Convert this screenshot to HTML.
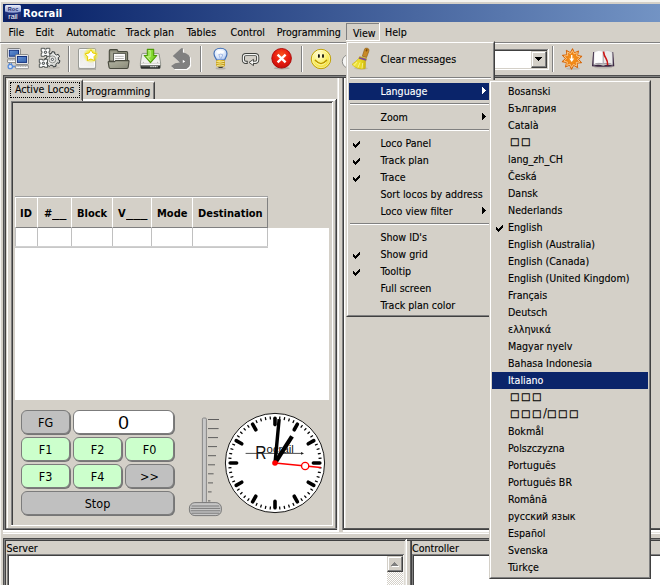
<!DOCTYPE html>
<html><head><meta charset="utf-8"><title>Rocrail</title>
<style>
html,body{margin:0;padding:0;}
body{width:660px;height:585px;overflow:hidden;background:#D4D0C8;position:relative;font-family:"DejaVu Sans Condensed","DejaVu Sans","Liberation Sans",sans-serif;font-stretch:condensed;font-size:10.6px;color:#000;}
#w{position:absolute;left:0;top:0;width:660px;height:585px;overflow:hidden;}
#w>div,#w>span,#w>svg{position:absolute;}
.t{white-space:pre;line-height:14px;height:14px;-webkit-text-stroke:0.12px currentColor;}
.b{font-weight:bold;font-size:11px;-webkit-text-stroke:0;}
.u{display:inline-block;transform:scaleX(1.45);transform-origin:0 0;}
.w{color:#fff;}
.btn{border-radius:6px;box-sizing:border-box;border:1px solid #7c7c7c;box-shadow:1px 1px 0 #767676;text-align:center;font-size:12.5px;line-height:24px;}
.tofu{font-family:"DejaVu Sans",sans-serif;font-stretch:normal;font-size:10px;letter-spacing:1.55px;-webkit-text-stroke:0.3px #000;}
.sl{letter-spacing:0;-webkit-text-stroke:0;font-size:12px;line-height:0;}
</style></head><body><div id="w">

<div style="left:0px;top:0px;width:660px;height:2px;background:#f4f3ef;"></div>
<div style="left:0px;top:0px;width:1px;height:585px;background:#f4f3ef;"></div>
<div style="left:3px;top:4px;width:657px;height:18px;background:linear-gradient(to right,#0A246A 0px,#0A246A 40px,#A6CAF0 960px);"></div>
<svg style="left:5px;top:5px" width="16" height="16" viewBox="0 0 16 16">
<defs><linearGradient id="ig" x1="0" y1="0" x2="0" y2="1"><stop offset="0" stop-color="#e8ecf8"/><stop offset="1" stop-color="#8c9cd0"/></linearGradient>
<linearGradient id="ig2" x1="0" y1="0" x2="0" y2="1"><stop offset="0" stop-color="#3048a0"/><stop offset="1" stop-color="#101c58"/></linearGradient></defs>
<rect x="0" y="0" width="16" height="16" rx="1.5" fill="url(#ig2)"/>
<path d="M0,1.5 Q0,0 1.5,0 H14.5 Q16,0 16,1.5 V6.5 Q8,9 0,6.5 Z" fill="url(#ig)"/>
<text x="8" y="6" font-size="5.5" font-weight="bold" text-anchor="middle" fill="#1c2c70" font-family="Liberation Sans,sans-serif">Roc</text>
<text x="8" y="14" font-size="7" text-anchor="middle" fill="#fff" font-family="Liberation Sans,sans-serif">rail</text>
</svg>
<span class="t b w" style="left:23px;top:7px;font-size:11.2px;">Rocrail</span>
<span class="t" style="left:8.5px;top:25px;">File</span>
<span class="t" style="left:35.5px;top:25px;">Edit</span>
<span class="t" style="left:66.5px;top:25px;">Automatic</span>
<span class="t" style="left:125.7px;top:25px;">Track plan</span>
<span class="t" style="left:186.7px;top:25px;">Tables</span>
<span class="t" style="left:230.5px;top:25px;">Control</span>
<span class="t" style="left:276.7px;top:25px;">Programming</span>
<span class="t" style="left:385px;top:25px;">Help</span>
<div style="left:346px;top:23px;width:34px;height:1px;background:#808080;"></div>
<div style="left:346px;top:23px;width:1px;height:18px;background:#808080;"></div>
<div style="left:379px;top:23px;width:1px;height:18px;background:#fff;"></div>
<div style="left:346px;top:40px;width:34px;height:1px;background:#fff;"></div>
<span class="t" style="left:353px;top:26px;">View</span>
<div style="left:0px;top:42px;width:660px;height:1px;background:#808080;"></div>
<div style="left:0px;top:43px;width:660px;height:1px;background:#ffffff;"></div>
<div style="left:68px;top:46px;width:1px;height:26px;background:#808080;"></div>
<div style="left:69px;top:46px;width:1px;height:26px;background:#ffffff;"></div>
<div style="left:200px;top:46px;width:1px;height:26px;background:#808080;"></div>
<div style="left:201px;top:46px;width:1px;height:26px;background:#ffffff;"></div>
<div style="left:301px;top:46px;width:1px;height:26px;background:#808080;"></div>
<div style="left:302px;top:46px;width:1px;height:26px;background:#ffffff;"></div>
<div style="left:552px;top:46px;width:1px;height:26px;background:#808080;"></div>
<div style="left:553px;top:46px;width:1px;height:26px;background:#ffffff;"></div>
<svg style="left:0px;top:44px" width="660" height="31" viewBox="0 44 660 31">
<defs>
<linearGradient id="scr" x1="0" y1="0" x2="1" y2="1"><stop offset="0" stop-color="#6a94d4"/><stop offset="0.5" stop-color="#4a78c0"/><stop offset="1" stop-color="#3a66b0"/></linearGradient>
<linearGradient id="pg" x1="0" y1="0" x2="1" y2="1"><stop offset="0" stop-color="#e2e4e0"/><stop offset="0.5" stop-color="#f2f2f0"/><stop offset="1" stop-color="#eaeae8"/></linearGradient>
<radialGradient id="glow"><stop offset="0" stop-color="#f8f020" stop-opacity="0.95"/><stop offset="0.6" stop-color="#f2ee30" stop-opacity="0.8"/><stop offset="0.85" stop-color="#eeea50" stop-opacity="0.35"/><stop offset="1" stop-color="#eeea60" stop-opacity="0"/></radialGradient>
<linearGradient id="fold" x1="0" y1="0" x2="1" y2="1"><stop offset="0" stop-color="#b2b4a2"/><stop offset="0.6" stop-color="#9a9b88"/><stop offset="1" stop-color="#86877a"/></linearGradient>
<linearGradient id="drv" x1="0" y1="0" x2="0" y2="1"><stop offset="0" stop-color="#e4e6e2"/><stop offset="0.75" stop-color="#f4f4f2"/><stop offset="1" stop-color="#ffffff"/></linearGradient>
<linearGradient id="grn" x1="0" y1="0" x2="1" y2="0"><stop offset="0" stop-color="#b0ee72"/><stop offset="0.5" stop-color="#8ade38"/><stop offset="1" stop-color="#6cc41c"/></linearGradient>
<radialGradient id="bulb" cx="0.4" cy="0.35" r="0.7"><stop offset="0" stop-color="#ffffff"/><stop offset="0.6" stop-color="#dce8fa"/><stop offset="1" stop-color="#a8c0ec"/></radialGradient>
<linearGradient id="gold" x1="0" y1="0" x2="1" y2="0"><stop offset="0" stop-color="#d4a40c"/><stop offset="0.35" stop-color="#f4da50"/><stop offset="1" stop-color="#c4940a"/></linearGradient>
<radialGradient id="red" cx="0.5" cy="0.32" r="0.72"><stop offset="0" stop-color="#f8541c"/><stop offset="0.5" stop-color="#ea2012"/><stop offset="1" stop-color="#c40a08"/></radialGradient>
<radialGradient id="smile" cx="0.4" cy="0.3" r="0.8"><stop offset="0" stop-color="#fffde4"/><stop offset="0.5" stop-color="#fbf06a"/><stop offset="1" stop-color="#ecd420"/></radialGradient>
<radialGradient id="sun" cx="0.5" cy="0.5" r="0.5"><stop offset="0" stop-color="#f49a28"/><stop offset="0.7" stop-color="#ee7c0c"/><stop offset="1" stop-color="#e06a04"/></radialGradient>
<linearGradient id="gear" x1="0" y1="0" x2="1" y2="1"><stop offset="0" stop-color="#c4c6c2"/><stop offset="0.5" stop-color="#f0f0ee"/><stop offset="1" stop-color="#b8bab6"/></linearGradient>
</defs>
<rect x="7.5" y="48.5" width="12.8" height="9.6" rx="0.8" fill="#ffffff" stroke="#7e7e7e" stroke-width="1"/>
<rect x="9.3" y="50.3" width="9.2" height="5.9" fill="url(#scr)" stroke="#12307e" stroke-width="1"/>
<rect x="7.5" y="59.1" width="12.8" height="3.4" rx="0.5" fill="#fbfbfb" stroke="#868686" stroke-width="0.9"/>
<path d="M8.4,60.2h11" stroke="#a4a4a4" stroke-width="0.9" stroke-dasharray="1.2,0.5"/>
<rect x="15.6" y="54.7" width="12.8" height="9.6" rx="0.8" fill="#ffffff" stroke="#7e7e7e" stroke-width="1"/>
<rect x="17.4" y="56.5" width="9.2" height="5.9" fill="url(#scr)" stroke="#12307e" stroke-width="1"/>
<rect x="15.6" y="65.3" width="12.8" height="3.4" rx="0.5" fill="#fbfbfb" stroke="#868686" stroke-width="0.9"/>
<path d="M16.5,66.4h11" stroke="#a4a4a4" stroke-width="0.9" stroke-dasharray="1.2,0.5"/>
<circle cx="10.3" cy="66.5" r="2.2" fill="#dfe6f0" stroke="#5a8edc" stroke-width="1.3"/>
<path d="M9.3,63v1.7M11.3,63v1.7" stroke="#4a80d4" stroke-width="1"/>
<path d="M12.6,66.5h2.6" stroke="#5a8edc" stroke-width="1.7"/>
<ellipse cx="53" cy="67.6" rx="7" ry="1.2" fill="#a8a49c" opacity="0.5"/>
<polygon points="58.48,59.95 59.99,60.71 59.05,63.29 57.40,62.90 55.76,64.49 56.11,66.15 53.50,67.02 52.78,65.49 50.52,65.20 49.44,66.51 47.13,65.01 47.88,63.50 46.69,61.54 45.00,61.52 44.73,58.78 46.38,58.42 47.16,56.27 46.13,54.93 48.10,53.01 49.41,54.08 51.58,53.36 51.99,51.71 54.71,52.06 54.70,53.75 56.62,54.99 58.15,54.28 59.58,56.63 58.25,57.67" fill="url(#gear)" stroke="#2e3436" stroke-width="1.0" stroke-linejoin="round"/>
<circle cx="52.4" cy="59.4" r="3.5" fill="#e4e4e2" stroke="#8a8c88" stroke-width="0.9"/>
<circle cx="52.4" cy="59.4" r="1.1" fill="#ffffff" stroke="#2e3436" stroke-width="0.8"/>
<polygon points="41.20,48.30 44.50,48.30 44.50,49.10 46.50,49.10 46.50,48.30 49.80,48.30 49.80,51.30 49.00,51.30 49.00,53.30 49.80,53.30 49.80,56.30 46.50,56.30 46.50,55.50 44.50,55.50 44.50,56.30 41.20,56.30 41.20,53.30 42.00,53.30 42.00,51.30 41.20,51.30" fill="#fafafa" stroke="#3a3e3c" stroke-width="0.85" stroke-linejoin="round"/>
<circle cx="45.5" cy="52.3" r="1.2" fill="#d8d8d8" stroke="#2e3436" stroke-width="0.9"/>
<polygon points="39.30,59.30 42.40,59.30 42.40,60.10 44.40,60.10 44.40,59.30 47.50,59.30 47.50,62.30 46.70,62.30 46.70,64.30 47.50,64.30 47.50,67.30 44.40,67.30 44.40,66.50 42.40,66.50 42.40,67.30 39.30,67.30 39.30,64.30 40.10,64.30 40.10,62.30 39.30,62.30" fill="#fafafa" stroke="#3a3e3c" stroke-width="0.85" stroke-linejoin="round"/>
<circle cx="43.4" cy="63.3" r="1.2" fill="#d8d8d8" stroke="#2e3436" stroke-width="0.9"/>
<path d="M78.2,69h17.8" stroke="#8e8e8a" stroke-width="1.1"/>
<rect x="78.6" y="48.6" width="17" height="19.6" rx="1" fill="url(#pg)" stroke="#8a8c88" stroke-width="0.9"/>
<rect x="79.6" y="49.6" width="15" height="17.6" rx="0.5" fill="none" stroke="#ffffff" stroke-width="0.9"/>
<circle cx="90.9" cy="55.3" r="8" fill="url(#glow)"/>
<polygon points="90.90,49.60 92.84,53.03 96.70,53.81 94.04,56.72 94.49,60.64 90.90,59.00 87.31,60.64 87.76,56.72 85.10,53.81 88.96,53.03" fill="#ffffff" stroke="#eacc00" stroke-width="1.0" stroke-linejoin="round"/>
<path d="M109.3,51 Q109.3,49.6 110.6,49.6 H116.4 Q117.3,49.6 117.7,50.5 L118.2,51.5 H126.4 Q127.6,51.5 127.6,52.7 V61 H109.3 Z" fill="#8a8b78" stroke="#484a3e" stroke-width="1.1"/>
<path d="M110.4,51.4 H116.6 L117.4,52.8 H113 V60.5 H110.4 Z" fill="#a6a896" opacity="0.8"/>
<rect x="113.6" y="53.4" width="11.8" height="8" fill="#ffffff" stroke="#52544a" stroke-width="0.9"/>
<path d="M115.2,56.3h8.6M115.2,58.5h8.6" stroke="#b8b8b4" stroke-width="1"/>
<path d="M108.6,61.6 H114.6 L115.6,60.6 H128.6 Q129.1,60.6 129,61.2 L128.2,67.2 Q128,68.5 126.8,68.5 H110.4 Q109.2,68.5 109,67.2 L108.2,62.2 Q108.1,61.6 108.6,61.6Z" fill="url(#fold)" stroke="#484a3e" stroke-width="1.1" stroke-linejoin="round"/>
<path d="M142.6,53.4 H158.2 Q158.9,53.4 159.1,54.1 L160.6,63 V66 H140.4 V63 L141.8,54.1 Q142,53.4 142.6,53.4 Z" fill="url(#drv)" stroke="#8c8e88" stroke-width="0.9"/>
<path d="M141,63.3 H160" stroke="#c8cac4" stroke-width="0.8"/>
<circle cx="143.4" cy="62.2" r="0.5" fill="#9a9c96"/><circle cx="157.6" cy="62.2" r="0.5" fill="#9a9c96"/>
<path d="M140.6,65.6 H160.4 V67.6 Q160.4,68.8 159.2,68.8 H141.8 Q140.6,68.8 140.6,67.6 Z" fill="#2a2e2c"/>
<path d="M141.4,66.5 H150" stroke="#5c605c" stroke-width="0.8"/>
<path d="M150.2,66.7h7.4" stroke="#d8dad6" stroke-width="1.3" stroke-dasharray="1.6,0.5"/>
<path d="M147.3,49.4 H153.7 V55.5 H156.8 L150.5,62.6 L144.2,55.5 H147.3 Z" fill="url(#grn)" stroke="#4e9a06" stroke-width="1.1" stroke-linejoin="round"/>
<path d="M148.6,50.6 H150.2 V56.8 H147.2 L150.5,60.6" fill="none" stroke="#d2f6a2" stroke-width="0.9" opacity="0.85"/>
<path d="M181.2,48.2 L182.9,48.2 L182.9,52.6 L185.8,53.3 L188.6,54.9 L189.9,57 L190.1,64.4 L189.2,66.7 L186.4,68.9 L174.2,68.9 L171.1,65.9 L175.2,63.2 L179.8,62.6 L172.8,55.9 Z" fill="#ffffff" transform="translate(1,1)"/>
<path d="M181.2,48.2 L182.9,48.2 L182.9,52.6 L185.8,53.3 L188.6,54.9 L189.9,57 L190.1,64.4 L189.2,66.7 L186.4,68.9 L174.2,68.9 L171.1,65.9 L175.2,63.2 L179.8,62.6 L172.8,55.9 Z" fill="#808080"/>
<path d="M182.8,59.7 L182.8,63.1 L185.2,61.4 Z" fill="#ffffff"/>
<ellipse cx="220.6" cy="68.4" rx="5" ry="1.1" fill="#9a968e" opacity="0.55"/>
<path d="M220.5,48.3 C224.8,48.3 227,50.8 227,53.6 C227,56.8 225.2,57.8 224.7,60 H216.5 C216,57.8 214,56.8 214,53.6 C214,50.8 216.2,48.3 220.5,48.3 Z" fill="url(#bulb)" stroke="#3e6cb4" stroke-width="1.1"/>
<ellipse cx="220.4" cy="51.8" rx="3.6" ry="1.5" fill="#ffffff" opacity="0.9"/>
<path d="M218.3,54.8 Q220.6,53.4 222.9,54.8 L220.7,59.4 M219.2,55.2 L220.3,58.6" stroke="#88a4dc" stroke-width="0.7" fill="none"/>
<rect x="216.2" y="59.9" width="8.8" height="6.8" rx="1.4" fill="url(#gold)"/>
<path d="M216.6,61.6 q4.2,1.2 8,-0.3 M216.6,63.5 q4.2,1.2 8,-0.3 M216.8,65.3 q4.2,1.2 7.6,-0.3" stroke="#fdf6c0" stroke-width="0.8" fill="none"/>
<path d="M216.4,62.6 q4.2,1.2 8.4,-0.3 M216.4,64.5 q4.2,1.2 8.4,-0.3" stroke="#b08c08" stroke-width="0.6" fill="none"/>
<path d="M218,66.8h5.2l-0.9,1.3h-3.4z" fill="#3c3c3a"/>
<path d="M247.4,62.4 H246 Q243.4,62.4 243.4,59.8 V57.1 Q243.4,54.5 246,54.5 H255.1 Q257.7,54.5 257.7,57.1 V59.8 Q257.7,62.4 255.1,62.4 H253.2" fill="none" stroke="#3e403c" stroke-width="3.1" stroke-linecap="butt"/>
<path d="M247.4,62.4 H246 Q243.4,62.4 243.4,59.8 V57.1 Q243.4,54.5 246,54.5 H255.1 Q257.7,54.5 257.7,57.1 V59.8 Q257.7,62.4 255.1,62.4 H253.2" fill="none" stroke="#f6f6f4" stroke-width="1.25" stroke-linecap="butt"/>
<path d="M247.2,60.9 V63.9" stroke="#3e403c" stroke-width="0.9"/>
<path d="M253.5,59.3 L249,62.4 L253.5,65.6 Z" fill="#f6f6f4" stroke="#3e403c" stroke-width="0.9" stroke-linejoin="round"/>
<path d="M253.2,62.4 H255.4" stroke="#f6f6f4" stroke-width="1.25"/>
<ellipse cx="281.8" cy="68.2" rx="8" ry="1.3" fill="#8a867e" opacity="0.5"/>
<circle cx="281.6" cy="58.3" r="9.8" fill="url(#red)" stroke="#a80404" stroke-width="0.9"/>
<path d="M277.6,54.6 L285.6,62.4 M285.6,54.6 L277.6,62.4" stroke="#ffffff" stroke-width="2.4" stroke-linecap="butt"/>
<circle cx="321" cy="59" r="9.7" fill="url(#smile)" stroke="#c0a000" stroke-width="1"/>
<circle cx="321" cy="59" r="8.7" fill="none" stroke="#ffffff" stroke-width="0.8" opacity="0.55"/>
<ellipse cx="318.9" cy="56" rx="1" ry="1.9" fill="#14120a"/><ellipse cx="323" cy="56" rx="1" ry="1.9" fill="#14120a"/>
<path d="M315.3,60.3 Q321,66.9 326.6,60.3" fill="none" stroke="#b89400" stroke-width="1.4" stroke-linecap="round"/>
<path d="M316,62.4 Q321,67.6 326,62.4" fill="none" stroke="#fffbd0" stroke-width="0.8" opacity="0.7"/>
<ellipse cx="349" cy="61.4" rx="6.7" ry="6.8" fill="#f6f6f4" stroke="#8a8a88" stroke-width="1"/>
<ellipse cx="573" cy="68.6" rx="7" ry="1.2" fill="#a8a49c" opacity="0.5"/>
<polygon points="572.54,48.61 574.37,52.84 578.54,50.92 577.54,55.41 582.05,56.31 578.59,59.35 581.71,62.73 577.13,63.15 577.66,67.72 573.71,65.38 571.46,69.39 569.63,65.16 565.46,67.08 566.46,62.59 561.95,61.69 565.41,58.65 562.29,55.27 566.87,54.85 566.34,50.28 570.29,52.62" fill="url(#sun)" stroke="#d46204" stroke-width="0.9" stroke-linejoin="round"/>
<polygon points="572.44,50.61 573.97,53.87 577.29,52.47 576.61,56.00 580.11,56.83 577.49,59.29 579.84,62.01 576.27,62.46 576.57,66.04 573.42,64.31 571.56,67.39 570.03,64.13 566.71,65.53 567.39,62.00 563.89,61.17 566.51,58.71 564.16,55.99 567.73,55.54 567.43,51.96 570.58,53.69" fill="none" stroke="#fdd49a" stroke-width="0.8" stroke-linejoin="round"/>
<path d="M571.05,55 h1.3 v3.4 h1.75 l-2.4,3.7 l-2.4,-3.7 h1.75 z" fill="#ffffff"/>
<ellipse cx="603.2" cy="67.4" rx="9" ry="1.2" fill="#a8a49c" opacity="0.6"/>
<path d="M593.1,51.9 L592,66.2 Q603.2,67.4 614.3,66.2 L613.2,51.9 Z" fill="#3a2642"/>
<path d="M593.7,64.4 Q598.5,62.5 603.2,64.1 Q607.9,62.5 612.7,64.4 L612.9,65.5 Q607.9,64 603.2,65.7 Q598.5,64 593.5,65.5 Z" fill="#c4c4c2"/>
<path d="M594.1,52.3 Q598.6,49 603.2,51.5 L603.2,63.7 Q598.5,62 593.7,64.4 Z" fill="#fdfdfd" stroke="#b4b0b8" stroke-width="0.4"/>
<path d="M612.3,52.3 Q607.8,49 603.2,51.5 L603.2,63.7 Q607.9,62 612.7,64.4 Z" fill="#eaeaea" stroke="#b4b0b8" stroke-width="0.4"/>
<path d="M603.2,51.8 V63.6" stroke="#9a98a0" stroke-width="0.5"/>
<path d="M603.5,51.6 Q604,55.6 606,58.4 Q607.9,61.4 607.6,65.2" fill="none" stroke="#cc1414" stroke-width="1.6"/>
</svg>
<div style="left:494px;top:49px;width:55px;height:21px;background:#fff;"></div>
<div style="left:494px;top:49px;width:55px;height:1px;background:#808080;"></div>
<div style="left:494px;top:50px;width:54px;height:1px;background:#404040;"></div>
<div style="left:494px;top:68px;width:54px;height:1px;background:#D4D0C8;"></div>
<div style="left:494px;top:69px;width:55px;height:1px;background:#ffffff;"></div>
<div style="left:547px;top:50px;width:1px;height:19px;background:#D4D0C8;"></div>
<div style="left:548px;top:49px;width:1px;height:21px;background:#ffffff;"></div>
<div style="left:531px;top:51px;width:16px;height:17px;background:#D4D0C8;box-sizing:border-box;border-top:1px solid #D4D0C8;border-left:1px solid #D4D0C8;border-right:1px solid #404040;border-bottom:1px solid #404040;box-shadow:inset -1px -1px 0 #808080,inset 1px 1px 0 #ffffff;"></div>
<svg style="left:535px;top:57px" width="7" height="4" shape-rendering="crispEdges"><path d="M0,0H7V1H0zM1,1H6V2H1zM2,2H5V3H2zM3,3H4V4H3z" fill="#000"/></svg>
<div style="left:3px;top:75px;width:657px;height:1px;background:#505050;"></div>
<div style="left:3px;top:76px;width:657px;height:1px;background:#808080;"></div>
<div style="left:3px;top:77px;width:657px;height:1px;background:#404040;"></div>
<div style="left:3px;top:75px;width:1px;height:455px;background:#505050;"></div>
<div style="left:4px;top:76px;width:1px;height:454px;background:#808080;"></div>
<div style="left:5px;top:77px;width:1px;height:453px;background:#404040;"></div>
<div style="left:7px;top:79px;width:76px;height:22px;background:#D4D0C8;border-top:1px solid #fff;border-left:1px solid #fff;border-right:1px solid #404040;box-sizing:border-box;border-radius:2px 2px 0 0;"></div>
<div style="left:81px;top:81px;width:1px;height:19px;background:#808080;"></div>
<div style="left:10px;top:82px;width:70px;height:16px;background:transparent;border:1px dotted #000;box-sizing:border-box;"></div>
<span class="t" style="left:15px;top:82px;">Active Locos</span>
<div style="left:83px;top:81px;width:72px;height:19px;background:#D4D0C8;border-top:1px solid #fff;border-right:1px solid #404040;box-sizing:border-box;border-radius:0 2px 0 0;"></div>
<div style="left:153px;top:83px;width:1px;height:17px;background:#808080;"></div>
<span class="t" style="left:86px;top:84px;">Programming</span>
<div style="left:83px;top:99px;width:254px;height:1px;background:#ffffff;"></div>
<div style="left:83px;top:100px;width:254px;height:1px;background:#ffffff;"></div>
<div style="left:7px;top:100px;width:1px;height:429px;background:#ffffff;"></div>
<div style="left:335px;top:100px;width:1px;height:430px;background:#808080;"></div>
<div style="left:336px;top:99px;width:1px;height:431px;background:#404040;"></div>
<div style="left:6px;top:528px;width:331px;height:1px;background:#808080;"></div>
<div style="left:6px;top:529px;width:331px;height:1px;background:#404040;"></div>
<div style="left:337px;top:78px;width:1px;height:452px;background:#eceae6;"></div>
<div style="left:338px;top:78px;width:1px;height:454px;background:#ffffff;"></div>
<div style="left:11px;top:101px;width:322px;height:1px;background:#808080;"></div>
<div style="left:11px;top:102px;width:322px;height:1px;background:#404040;"></div>
<div style="left:11px;top:101px;width:1px;height:425px;background:#808080;"></div>
<div style="left:12px;top:102px;width:1px;height:423px;background:#404040;"></div>
<div style="left:332px;top:102px;width:1px;height:424px;background:#ffffff;"></div>
<div style="left:11px;top:525px;width:322px;height:1px;background:#ffffff;"></div>
<div style="left:15px;top:228px;width:314px;height:172px;background:#ffffff;"></div>
<div style="left:15px;top:197px;width:23px;height:31px;background:#D4D0C8;box-sizing:border-box;border-top:1px solid #fff;border-left:1px solid #fff;border-right:1px solid #808080;border-bottom:1px solid #808080;"></div>
<span class="t b" style="left:20px;top:207px;">ID</span>
<div style="left:37px;top:197px;width:35px;height:31px;background:#D4D0C8;box-sizing:border-box;border-top:1px solid #fff;border-left:1px solid #fff;border-right:1px solid #808080;border-bottom:1px solid #808080;"></div>
<span class="t b" style="left:44px;top:207px;">#<span class="u">__</span></span>
<div style="left:71px;top:197px;width:42px;height:31px;background:#D4D0C8;box-sizing:border-box;border-top:1px solid #fff;border-left:1px solid #fff;border-right:1px solid #808080;border-bottom:1px solid #808080;"></div>
<span class="t b" style="left:77px;top:207px;">Block</span>
<div style="left:112px;top:197px;width:40px;height:31px;background:#D4D0C8;box-sizing:border-box;border-top:1px solid #fff;border-left:1px solid #fff;border-right:1px solid #808080;border-bottom:1px solid #808080;"></div>
<span class="t b" style="left:118px;top:207px;">V<span class="u">___</span></span>
<div style="left:151px;top:197px;width:42px;height:31px;background:#D4D0C8;box-sizing:border-box;border-top:1px solid #fff;border-left:1px solid #fff;border-right:1px solid #808080;border-bottom:1px solid #808080;"></div>
<span class="t b" style="left:157px;top:207px;">Mode</span>
<div style="left:192px;top:197px;width:76px;height:31px;background:#D4D0C8;box-sizing:border-box;border-top:1px solid #fff;border-left:1px solid #fff;border-right:1px solid #808080;border-bottom:1px solid #808080;"></div>
<span class="t b" style="left:198px;top:207px;">Destination</span>
<div style="left:15px;top:196px;width:253px;height:1px;background:#a0a0a0;"></div>
<div style="left:15px;top:228px;width:1px;height:19px;background:#c0c0c0;"></div>
<div style="left:37px;top:228px;width:1px;height:19px;background:#c0c0c0;"></div>
<div style="left:71px;top:228px;width:1px;height:19px;background:#c0c0c0;"></div>
<div style="left:112px;top:228px;width:1px;height:19px;background:#c0c0c0;"></div>
<div style="left:151px;top:228px;width:1px;height:19px;background:#c0c0c0;"></div>
<div style="left:192px;top:228px;width:1px;height:19px;background:#c0c0c0;"></div>
<div style="left:267px;top:228px;width:1px;height:19px;background:#c0c0c0;"></div>
<div style="left:15px;top:246px;width:253px;height:1px;background:#d0d0d0;"></div>
<div style="left:15px;top:247px;width:253px;height:1px;background:#c8c8c8;"></div>
<div class="btn" style="left:21px;top:410px;width:49px;height:24px;background:#C0C0C0;font-size:12.5px;">FG</div>
<div class="btn" style="left:73px;top:410px;width:101px;height:24px;background:#fff;font-size:19px;line-height:23px;font-family:'Liberation Sans',sans-serif;">0</div>
<div class="btn" style="left:21px;top:437px;width:49px;height:24px;background:#CCFFCC;font-size:12.5px;">F1</div>
<div class="btn" style="left:73px;top:437px;width:49px;height:24px;background:#CCFFCC;font-size:12.5px;">F2</div>
<div class="btn" style="left:125px;top:437px;width:49px;height:24px;background:#CCFFCC;font-size:12.5px;">F0</div>
<div class="btn" style="left:21px;top:464px;width:49px;height:24px;background:#CCFFCC;font-size:12.5px;">F3</div>
<div class="btn" style="left:73px;top:464px;width:49px;height:24px;background:#CCFFCC;font-size:12.5px;">F4</div>
<div class="btn" style="left:125px;top:464px;width:49px;height:24px;background:#C0C0C0;font-size:12.5px;">&gt;&gt;</div>
<div class="btn" style="left:21px;top:491px;width:153px;height:24px;background:#C0C0C0;font-size:12.5px;">Stop</div>
<svg style="left:185px;top:408px" width="150" height="112" viewBox="185 408 150 112">
<defs><linearGradient id="trk" x1="0" y1="0" x2="1" y2="0"><stop offset="0" stop-color="#8a8a8a"/><stop offset="0.5" stop-color="#d0d0d0"/><stop offset="1" stop-color="#8a8a8a"/></linearGradient></defs>
<rect x="202.4" y="418" width="4" height="85" rx="1.2" fill="#c8c8c8" stroke="#808080" stroke-width="0.9"/>
<path d="M208,419.5h11" stroke="#505050" stroke-width="0.9"/>
<path d="M208,428.6h10.6" stroke="#505050" stroke-width="0.9"/>
<path d="M208,437.6h10" stroke="#505050" stroke-width="0.9"/>
<path d="M208,446.6h9" stroke="#505050" stroke-width="0.9"/>
<path d="M208,455.7h8" stroke="#505050" stroke-width="0.9"/>
<path d="M208,464.8h7" stroke="#505050" stroke-width="0.9"/>
<path d="M208,473.8h5.6" stroke="#505050" stroke-width="0.9"/>
<path d="M208,482.9h5" stroke="#505050" stroke-width="0.9"/>
<path d="M208,491.9h3.6" stroke="#505050" stroke-width="0.9"/>
<path d="M208,500.9h2.4" stroke="#505050" stroke-width="0.9"/>
<rect x="189.4" y="502.6" width="32" height="13" rx="5.5" fill="#c6c6c6" stroke="#707070" stroke-width="0.9"/>
<path d="M191.5,506h27.8M190.6,508.4h29.6M190.6,510.8h29.6M191.5,513.2h27.8" stroke="#707070" stroke-width="0.9"/>
<circle cx="275.0" cy="463.0" r="49.6" fill="#ffffff" stroke="#000" stroke-width="0.9"/>
<path d="M275.00,424.60L275.00,418.20" stroke="#000" stroke-width="3.6" stroke-linecap="round"/>
<path d="M279.58,419.44L279.89,416.46" stroke="#000" stroke-width="1.25" stroke-linecap="butt"/>
<path d="M284.11,420.16L284.73,417.22" stroke="#000" stroke-width="1.25" stroke-linecap="butt"/>
<path d="M288.53,421.34L289.46,418.49" stroke="#000" stroke-width="1.25" stroke-linecap="butt"/>
<path d="M292.82,422.99L294.04,420.25" stroke="#000" stroke-width="1.25" stroke-linecap="butt"/>
<path d="M294.20,429.74L297.40,424.20" stroke="#000" stroke-width="3.6" stroke-linecap="round"/>
<path d="M300.74,427.57L302.51,425.14" stroke="#000" stroke-width="1.25" stroke-linecap="butt"/>
<path d="M304.31,430.45L306.32,428.22" stroke="#000" stroke-width="1.25" stroke-linecap="butt"/>
<path d="M307.55,433.69L309.78,431.68" stroke="#000" stroke-width="1.25" stroke-linecap="butt"/>
<path d="M310.43,437.26L312.86,435.49" stroke="#000" stroke-width="1.25" stroke-linecap="butt"/>
<path d="M308.26,443.80L313.80,440.60" stroke="#000" stroke-width="3.6" stroke-linecap="round"/>
<path d="M315.01,445.18L317.75,443.96" stroke="#000" stroke-width="1.25" stroke-linecap="butt"/>
<path d="M316.66,449.47L319.51,448.54" stroke="#000" stroke-width="1.25" stroke-linecap="butt"/>
<path d="M317.84,453.89L320.78,453.27" stroke="#000" stroke-width="1.25" stroke-linecap="butt"/>
<path d="M318.56,458.42L321.54,458.11" stroke="#000" stroke-width="1.25" stroke-linecap="butt"/>
<path d="M313.40,463.00L319.80,463.00" stroke="#000" stroke-width="3.6" stroke-linecap="round"/>
<path d="M318.56,467.58L321.54,467.89" stroke="#000" stroke-width="1.25" stroke-linecap="butt"/>
<path d="M317.84,472.11L320.78,472.73" stroke="#000" stroke-width="1.25" stroke-linecap="butt"/>
<path d="M316.66,476.53L319.51,477.46" stroke="#000" stroke-width="1.25" stroke-linecap="butt"/>
<path d="M315.01,480.82L317.75,482.04" stroke="#000" stroke-width="1.25" stroke-linecap="butt"/>
<path d="M308.26,482.20L313.80,485.40" stroke="#000" stroke-width="3.6" stroke-linecap="round"/>
<path d="M310.43,488.74L312.86,490.51" stroke="#000" stroke-width="1.25" stroke-linecap="butt"/>
<path d="M307.55,492.31L309.78,494.32" stroke="#000" stroke-width="1.25" stroke-linecap="butt"/>
<path d="M304.31,495.55L306.32,497.78" stroke="#000" stroke-width="1.25" stroke-linecap="butt"/>
<path d="M300.74,498.43L302.51,500.86" stroke="#000" stroke-width="1.25" stroke-linecap="butt"/>
<path d="M294.20,496.26L297.40,501.80" stroke="#000" stroke-width="3.6" stroke-linecap="round"/>
<path d="M292.82,503.01L294.04,505.75" stroke="#000" stroke-width="1.25" stroke-linecap="butt"/>
<path d="M288.53,504.66L289.46,507.51" stroke="#000" stroke-width="1.25" stroke-linecap="butt"/>
<path d="M284.11,505.84L284.73,508.78" stroke="#000" stroke-width="1.25" stroke-linecap="butt"/>
<path d="M279.58,506.56L279.89,509.54" stroke="#000" stroke-width="1.25" stroke-linecap="butt"/>
<path d="M275.00,501.40L275.00,507.80" stroke="#000" stroke-width="3.6" stroke-linecap="round"/>
<path d="M270.42,506.56L270.11,509.54" stroke="#000" stroke-width="1.25" stroke-linecap="butt"/>
<path d="M265.89,505.84L265.27,508.78" stroke="#000" stroke-width="1.25" stroke-linecap="butt"/>
<path d="M261.47,504.66L260.54,507.51" stroke="#000" stroke-width="1.25" stroke-linecap="butt"/>
<path d="M257.18,503.01L255.96,505.75" stroke="#000" stroke-width="1.25" stroke-linecap="butt"/>
<path d="M255.80,496.26L252.60,501.80" stroke="#000" stroke-width="3.6" stroke-linecap="round"/>
<path d="M249.26,498.43L247.49,500.86" stroke="#000" stroke-width="1.25" stroke-linecap="butt"/>
<path d="M245.69,495.55L243.68,497.78" stroke="#000" stroke-width="1.25" stroke-linecap="butt"/>
<path d="M242.45,492.31L240.22,494.32" stroke="#000" stroke-width="1.25" stroke-linecap="butt"/>
<path d="M239.57,488.74L237.14,490.51" stroke="#000" stroke-width="1.25" stroke-linecap="butt"/>
<path d="M241.74,482.20L236.20,485.40" stroke="#000" stroke-width="3.6" stroke-linecap="round"/>
<path d="M234.99,480.82L232.25,482.04" stroke="#000" stroke-width="1.25" stroke-linecap="butt"/>
<path d="M233.34,476.53L230.49,477.46" stroke="#000" stroke-width="1.25" stroke-linecap="butt"/>
<path d="M232.16,472.11L229.22,472.73" stroke="#000" stroke-width="1.25" stroke-linecap="butt"/>
<path d="M231.44,467.58L228.46,467.89" stroke="#000" stroke-width="1.25" stroke-linecap="butt"/>
<path d="M236.60,463.00L230.20,463.00" stroke="#000" stroke-width="3.6" stroke-linecap="round"/>
<path d="M231.44,458.42L228.46,458.11" stroke="#000" stroke-width="1.25" stroke-linecap="butt"/>
<path d="M232.16,453.89L229.22,453.27" stroke="#000" stroke-width="1.25" stroke-linecap="butt"/>
<path d="M233.34,449.47L230.49,448.54" stroke="#000" stroke-width="1.25" stroke-linecap="butt"/>
<path d="M234.99,445.18L232.25,443.96" stroke="#000" stroke-width="1.25" stroke-linecap="butt"/>
<path d="M241.74,443.80L236.20,440.60" stroke="#000" stroke-width="3.6" stroke-linecap="round"/>
<path d="M239.57,437.26L237.14,435.49" stroke="#000" stroke-width="1.25" stroke-linecap="butt"/>
<path d="M242.45,433.69L240.22,431.68" stroke="#000" stroke-width="1.25" stroke-linecap="butt"/>
<path d="M245.69,430.45L243.68,428.22" stroke="#000" stroke-width="1.25" stroke-linecap="butt"/>
<path d="M249.26,427.57L247.49,425.14" stroke="#000" stroke-width="1.25" stroke-linecap="butt"/>
<path d="M255.80,429.74L252.60,424.20" stroke="#000" stroke-width="3.6" stroke-linecap="round"/>
<path d="M257.18,422.99L255.96,420.25" stroke="#000" stroke-width="1.25" stroke-linecap="butt"/>
<path d="M261.47,421.34L260.54,418.49" stroke="#000" stroke-width="1.25" stroke-linecap="butt"/>
<path d="M265.89,420.16L265.27,417.22" stroke="#000" stroke-width="1.25" stroke-linecap="butt"/>
<path d="M270.42,419.44L270.11,416.46" stroke="#000" stroke-width="1.25" stroke-linecap="butt"/>
<text x="255.2" y="459.2" font-family="Liberation Sans,sans-serif" font-size="17.6" fill="#111" textLength="11.2" lengthAdjust="spacingAndGlyphs">R</text>
<text x="266.6" y="452.7" font-family="Liberation Sans,sans-serif" font-size="11.4" fill="#111">ocrail</text>
<path d="M245.6,453.4H303" stroke="#222" stroke-width="0.8"/><path d="M301,452l3,1.4l-3,1.4z" fill="#222"/>
<path d="M275.00,463.00L292.03,436.38" stroke="#000" stroke-width="4.2" stroke-linecap="butt"/>
<path d="M275.00,463.00L279.14,419.20" stroke="#000" stroke-width="3.4" stroke-linecap="butt"/>
<path d="M275.00,463.00L320.78,467.49" stroke="#f00" stroke-width="1.4" stroke-linecap="butt"/>
<circle cx="305.16" cy="465.96" r="3.6" fill="#fff" stroke="#f00" stroke-width="1.3"/>
<circle cx="275.0" cy="463.0" r="2.8" fill="#f00"/>
</svg>
<div style="left:342px;top:78px;width:1px;height:452px;background:#808080;"></div>
<div style="left:343px;top:78px;width:1px;height:452px;background:#404040;"></div>
<div style="left:344px;top:78px;width:1px;height:451px;background:#ffffff;"></div>
<div style="left:345px;top:78px;width:1px;height:450px;background:#e8e6e1;"></div>
<div style="left:343px;top:528px;width:317px;height:1px;background:#585858;"></div>
<div style="left:343px;top:529px;width:317px;height:1px;background:#404040;"></div>
<div style="left:3px;top:530px;width:336px;height:2px;background:#ffffff;"></div>
<div style="left:343px;top:530px;width:317px;height:2px;background:#ffffff;"></div>
<div style="left:3px;top:532px;width:657px;height:1px;background:#e6e4de;"></div>
<div style="left:3px;top:533px;width:657px;height:1px;background:#ffffff;"></div>
<div style="left:3px;top:538px;width:657px;height:1px;background:#484848;"></div>
<div style="left:3px;top:539px;width:657px;height:1px;background:#808080;"></div>
<div style="left:3px;top:540px;width:657px;height:1px;background:#404040;"></div>
<div style="left:3px;top:538px;width:1px;height:47px;background:#505050;"></div>
<div style="left:4px;top:539px;width:1px;height:46px;background:#808080;"></div>
<div style="left:5px;top:540px;width:1px;height:45px;background:#404040;"></div>
<span class="t" style="left:6.5px;top:541px;">Server</span>
<div style="left:7px;top:554px;width:396px;height:31px;background:#ffffff;"></div>
<div style="left:7px;top:554px;width:397px;height:1px;background:#808080;"></div>
<div style="left:8px;top:555px;width:395px;height:1px;background:#404040;"></div>
<div style="left:7px;top:554px;width:1px;height:31px;background:#808080;"></div>
<div style="left:8px;top:555px;width:1px;height:30px;background:#404040;"></div>
<div style="left:387px;top:556px;width:16px;height:29px;background:#eae8e4;background-image:repeating-conic-gradient(#fff 0 25%,#D4D0C8 0 50%);background-size:2px 2px;"></div>
<div style="left:387px;top:556px;width:16px;height:16px;background:#D4D0C8;box-sizing:border-box;border-top:1px solid #D4D0C8;border-left:1px solid #D4D0C8;border-right:1px solid #404040;border-bottom:1px solid #404040;box-shadow:inset -1px -1px 0 #808080,inset 1px 1px 0 #ffffff;"></div>
<svg style="left:391px;top:562px" width="9" height="6" shape-rendering="crispEdges"><path d="M3,0H4V1H3zM2,1H5V2H2zM1,2H6V3H1zM0,3H7V4H0z" fill="#ffffff" transform="translate(1,1)"/><path d="M3,0H4V1H3zM2,1H5V2H2zM1,2H6V3H1zM0,3H7V4H0z" fill="#808080"/></svg>
<div style="left:403px;top:555px;width:1px;height:30px;background:#f4f3f0;"></div>
<div style="left:404px;top:541px;width:1px;height:44px;background:#dcd9d2;"></div>
<div style="left:405px;top:540px;width:1px;height:45px;background:#e8e6e1;"></div>
<div style="left:406px;top:539px;width:1px;height:46px;background:#ffffff;"></div>
<div style="left:410px;top:541px;width:1px;height:44px;background:#606060;"></div>
<div style="left:411px;top:541px;width:1px;height:44px;background:#404040;"></div>
<span class="t" style="left:412px;top:541px;">Controller</span>
<div style="left:412px;top:554px;width:248px;height:31px;background:#ffffff;"></div>
<div style="left:412px;top:554px;width:248px;height:1px;background:#808080;"></div>
<div style="left:412px;top:555px;width:248px;height:1px;background:#404040;"></div>
<div style="left:412px;top:554px;width:1px;height:31px;background:#808080;"></div>
<div style="left:413px;top:555px;width:1px;height:30px;background:#404040;"></div>
<div style="left:346px;top:41px;width:149px;height:276px;background:#D4D0C8;box-sizing:border-box;border-top:1px solid #D4D0C8;border-left:1px solid #D4D0C8;border-right:1px solid #404040;border-bottom:1px solid #404040;"></div>
<div style="left:347px;top:42px;width:147px;height:274px;background:#D4D0C8;box-sizing:border-box;border-top:1px solid #fff;border-left:1px solid #fff;border-right:1px solid #808080;border-bottom:1px solid #808080;"></div>
<svg style="left:350px;top:46px" width="24" height="24" viewBox="350 46 24 24">
<defs><linearGradient id="br1" x1="0" y1="0" x2="1" y2="0"><stop offset="0" stop-color="#f4ec50"/><stop offset="0.6" stop-color="#e8d820"/><stop offset="1" stop-color="#c8b010"/></linearGradient></defs>
<ellipse cx="361" cy="68.3" rx="7" ry="1.2" fill="#b8b4ac" opacity="0.7"/>
<path d="M365.2,48.3 Q367.3,47.6 368.7,49 Q369.3,50.2 368.6,52 L366.5,57.5 L362.3,56.2 L364.2,50.3 Q364.5,48.8 365.2,48.3Z" fill="#c88a28" stroke="#8a5a10" stroke-width="0.6"/>
<ellipse cx="366.6" cy="50.3" rx="0.9" ry="1.3" fill="#7a4c0c" transform="rotate(20 366.6 50.3)"/>
<path d="M359.6,56.6 L366.6,58.6 L365.4,62 Q365.5,66 365.2,68.6 Q361,69.6 357.5,68.2 Q354,66.8 352,64.4 Q356,61.5 358.7,58.6 Z" fill="url(#br1)" stroke="#c4a808" stroke-width="0.6"/>
<path d="M359.2,57.9 L366.2,59.9" stroke="#7a4a9a" stroke-width="1.7"/>
<path d="M357,62 L354,65.5 M360,62.5 L358,67.5 M362.7,63 L362,68.5" stroke="#fbf7a0" stroke-width="0.8" fill="none"/>
</svg>
<span class="t" style="left:380.4px;top:52px;">Clear messages</span>
<div style="left:350px;top:77px;width:141px;height:1px;background:#808080;"></div>
<div style="left:350px;top:78px;width:141px;height:1px;background:#ffffff;"></div>
<div style="left:349px;top:83px;width:143px;height:17px;background:#0A246A;"></div>
<span class="t w" style="left:380.4px;top:84px;">Language</span>
<svg style="left:482px;top:87px" width="4" height="7" shape-rendering="crispEdges"><path d="M0,0h1v7h-1zM1,1h1v5h-1zM2,2h1v3h-1zM3,3h1v1h-1z" fill="#fff"/></svg>
<div style="left:350px;top:103px;width:141px;height:1px;background:#808080;"></div>
<div style="left:350px;top:104px;width:141px;height:1px;background:#ffffff;"></div>
<span class="t" style="left:380.4px;top:110px;">Zoom</span>
<svg style="left:482px;top:113px" width="4" height="7" shape-rendering="crispEdges"><path d="M0,0h1v7h-1zM1,1h1v5h-1zM2,2h1v3h-1zM3,3h1v1h-1z" fill="#000"/></svg>
<div style="left:350px;top:129px;width:141px;height:1px;background:#808080;"></div>
<div style="left:350px;top:130px;width:141px;height:1px;background:#ffffff;"></div>
<span class="t" style="left:380.4px;top:136px;">Loco Panel</span>
<svg style="left:353px;top:141px" width="7" height="7" shape-rendering="crispEdges"><path d="M6,0h1v3h-1zM5,1h1v3h-1zM4,2h1v3h-1zM3,3h1v3h-1zM2,4h1v3h-1zM1,3h1v3h-1zM0,2h1v3h-1z" fill="#000"/></svg>
<span class="t" style="left:380.4px;top:153px;">Track plan</span>
<svg style="left:353px;top:158px" width="7" height="7" shape-rendering="crispEdges"><path d="M6,0h1v3h-1zM5,1h1v3h-1zM4,2h1v3h-1zM3,3h1v3h-1zM2,4h1v3h-1zM1,3h1v3h-1zM0,2h1v3h-1z" fill="#000"/></svg>
<span class="t" style="left:380.4px;top:170px;">Trace</span>
<svg style="left:353px;top:175px" width="7" height="7" shape-rendering="crispEdges"><path d="M6,0h1v3h-1zM5,1h1v3h-1zM4,2h1v3h-1zM3,3h1v3h-1zM2,4h1v3h-1zM1,3h1v3h-1zM0,2h1v3h-1z" fill="#000"/></svg>
<span class="t" style="left:380.4px;top:187px;">Sort locos by address</span>
<span class="t" style="left:380.4px;top:204px;">Loco view filter</span>
<svg style="left:482px;top:207px" width="4" height="7" shape-rendering="crispEdges"><path d="M0,0h1v7h-1zM1,1h1v5h-1zM2,2h1v3h-1zM3,3h1v1h-1z" fill="#000"/></svg>
<div style="left:350px;top:223px;width:141px;height:1px;background:#808080;"></div>
<div style="left:350px;top:224px;width:141px;height:1px;background:#ffffff;"></div>
<span class="t" style="left:380.4px;top:230px;">Show ID's</span>
<span class="t" style="left:380.4px;top:247px;">Show grid</span>
<svg style="left:353px;top:252px" width="7" height="7" shape-rendering="crispEdges"><path d="M6,0h1v3h-1zM5,1h1v3h-1zM4,2h1v3h-1zM3,3h1v3h-1zM2,4h1v3h-1zM1,3h1v3h-1zM0,2h1v3h-1z" fill="#000"/></svg>
<span class="t" style="left:380.4px;top:264px;">Tooltip</span>
<svg style="left:353px;top:269px" width="7" height="7" shape-rendering="crispEdges"><path d="M6,0h1v3h-1zM5,1h1v3h-1zM4,2h1v3h-1zM3,3h1v3h-1zM2,4h1v3h-1zM1,3h1v3h-1zM0,2h1v3h-1z" fill="#000"/></svg>
<span class="t" style="left:380.4px;top:281px;">Full screen</span>
<span class="t" style="left:380.4px;top:298px;">Track plan color</span>
<div style="left:489px;top:80px;width:162px;height:499px;background:#D4D0C8;box-sizing:border-box;border-top:1px solid #D4D0C8;border-left:1px solid #D4D0C8;border-right:1px solid #404040;border-bottom:1px solid #404040;"></div>
<div style="left:490px;top:81px;width:160px;height:497px;background:#D4D0C8;box-sizing:border-box;border-top:1px solid #fff;border-left:1px solid #fff;border-right:1px solid #808080;border-bottom:1px solid #808080;"></div>
<span class="t" style="left:508px;top:84px;">Bosanski</span>
<span class="t" style="left:508px;top:101px;">България</span>
<span class="t" style="left:508px;top:118px;">Català</span>
<span class="t tofu" style="left:510px;top:135px">□□</span>
<span class="t" style="left:508px;top:152px;">lang_zh_CH</span>
<span class="t" style="left:508px;top:169px;">Česká</span>
<span class="t" style="left:508px;top:186px;">Dansk</span>
<span class="t" style="left:508px;top:203px;">Nederlands</span>
<span class="t" style="left:508px;top:220px;">English</span>
<svg style="left:496px;top:225px" width="7" height="7" shape-rendering="crispEdges"><path d="M6,0h1v3h-1zM5,1h1v3h-1zM4,2h1v3h-1zM3,3h1v3h-1zM2,4h1v3h-1zM1,3h1v3h-1zM0,2h1v3h-1z" fill="#000"/></svg>
<span class="t" style="left:508px;top:237px;">English (Australia)</span>
<span class="t" style="left:508px;top:254px;">English (Canada)</span>
<span class="t" style="left:508px;top:271px;">English (United Kingdom)</span>
<span class="t" style="left:508px;top:288px;">Français</span>
<span class="t" style="left:508px;top:305px;">Deutsch</span>
<span class="t" style="left:508px;top:322px;">ελληνικά</span>
<span class="t" style="left:508px;top:339px;">Magyar nyelv</span>
<span class="t" style="left:508px;top:356px;">Bahasa Indonesia</span>
<div style="left:492px;top:372px;width:156px;height:17px;background:#0A246A;"></div>
<span class="t w" style="left:508px;top:373px;">Italiano</span>
<span class="t tofu" style="left:510px;top:390px">□□□</span>
<span class="t tofu" style="left:510px;top:407px">□□□<span class="sl">/</span>□□□</span>
<span class="t" style="left:508px;top:424px;">Bokmål</span>
<span class="t" style="left:508px;top:441px;">Polszczyzna</span>
<span class="t" style="left:508px;top:458px;">Português</span>
<span class="t" style="left:508px;top:475px;">Português BR</span>
<span class="t" style="left:508px;top:492px;">Română</span>
<span class="t" style="left:508px;top:509px;">русский язык</span>
<span class="t" style="left:508px;top:526px;">Español</span>
<span class="t" style="left:508px;top:543px;">Svenska</span>
<span class="t" style="left:508px;top:560px;">Türkçe</span>
</div></body></html>
